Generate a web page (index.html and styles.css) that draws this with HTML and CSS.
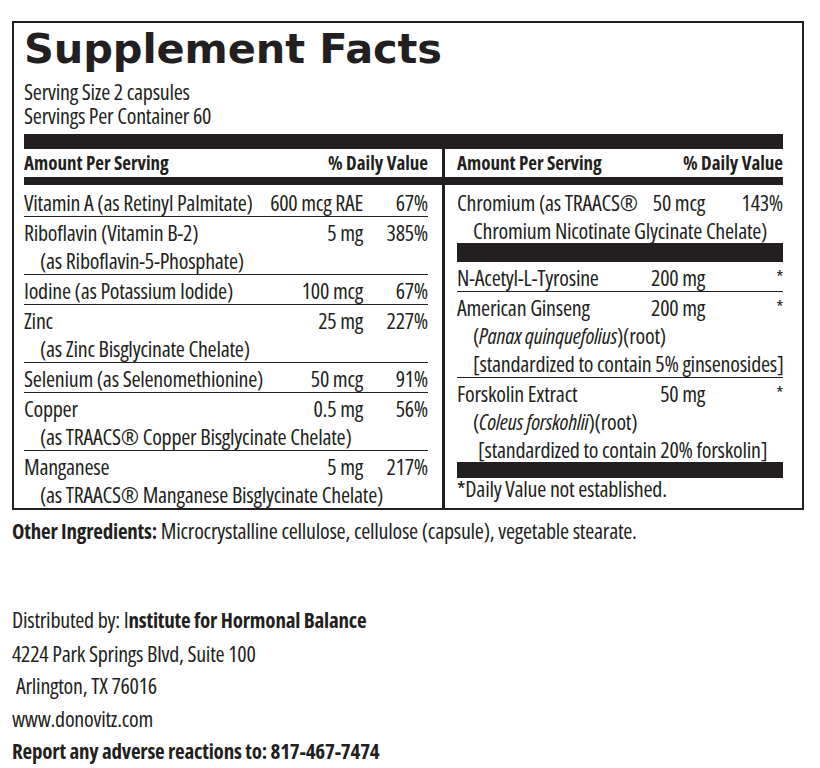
FILE: index.html
```html
<!DOCTYPE html>
<html lang="en">
<head>
<meta charset="utf-8">
<title>Supplement Facts</title>
<link rel="stylesheet" href="styles.css">
</head>
<body>
<div class="label">
  <h1 class="title">Supplement Facts</h1>
  <div class="serving">
    <div>Serving Size 2 capsules</div>
    <div>Servings Per Container 60</div>
  </div>
  <div class="bar bar-top"></div>
  <div class="cols">
    <section class="col col-left">
      <div class="head"><span>Amount Per Serving</span><span>% Daily Value</span></div>
      <div class="bar bar-head"></div>
      <div class="rows">
        <div class="row first">
          <div class="line"><span class="name">Vitamin A (as Retinyl Palmitate)</span><span class="amt">600 mcg RAE</span><span class="pct">67%</span></div>
        </div>
        <div class="row">
          <div class="line"><span class="name">Riboflavin (Vitamin B-2)</span><span class="amt">5 mg</span><span class="pct">385%</span></div>
          <div class="sub">(as Riboflavin-5-Phosphate)</div>
        </div>
        <div class="row">
          <div class="line"><span class="name">Iodine (as Potassium Iodide)</span><span class="amt">100 mcg</span><span class="pct">67%</span></div>
        </div>
        <div class="row">
          <div class="line"><span class="name">Zinc</span><span class="amt">25 mg</span><span class="pct">227%</span></div>
          <div class="sub">(as Zinc Bisglycinate Chelate)</div>
        </div>
        <div class="row">
          <div class="line"><span class="name">Selenium (as Selenomethionine)</span><span class="amt">50 mcg</span><span class="pct">91%</span></div>
        </div>
        <div class="row">
          <div class="line"><span class="name">Copper</span><span class="amt">0.5 mg</span><span class="pct">56%</span></div>
          <div class="sub">(as TRAACS® Copper Bisglycinate Chelate)</div>
        </div>
        <div class="row last">
          <div class="line"><span class="name">Manganese</span><span class="amt">5 mg</span><span class="pct">217%</span></div>
          <div class="sub">(as TRAACS® Manganese Bisglycinate Chelate)</div>
        </div>
      </div>
    </section>
    <section class="col col-right">
      <div class="head"><span>Amount Per Serving</span><span>% Daily Value</span></div>
      <div class="bar bar-head"></div>
      <div class="rows">
        <div class="row first last">
          <div class="line"><span class="name">Chromium (as TRAACS®</span><span class="amt">50 mcg</span><span class="pct">143%</span></div>
          <div class="sub">Chromium Nicotinate Glycinate Chelate)</div>
        </div>
        <div class="bar bar-mid"></div>
        <div class="row">
          <div class="line"><span class="name">N-Acetyl-L-Tyrosine</span><span class="amt">200 mg</span><span class="pct star">*</span></div>
        </div>
        <div class="row">
          <div class="line"><span class="name">American Ginseng</span><span class="amt">200 mg</span><span class="pct star">*</span></div>
          <div class="sub">(<i>Panax quinquefolius</i>)(root)</div>
          <div class="sub">[standardized to contain 5% ginsenosides]</div>
        </div>
        <div class="row last">
          <div class="line"><span class="name">Forskolin Extract</span><span class="amt">50 mg</span><span class="pct star">*</span></div>
          <div class="sub">(<i>Coleus forskohlii</i>)(root)</div>
          <div class="sub sub-wide">[standardized to contain 20% forskolin]</div>
        </div>
        <div class="bar bar-foot"></div>
        <div class="foot">*Daily Value not established.</div>
      </div>
    </section>
  </div>
</div>

<p class="other"><b>Other Ingredients:</b> Microcrystalline cellulose, cellulose (capsule), vegetable stearate.</p>

<div class="dist">
  <p>Distributed by: I<b>nstitute for Hormonal Balance</b></p>
  <p>4224 Park Springs Blvd, Suite 100</p>
  <p class="indent">Arlington, TX 76016</p>
  <p>www.donovitz.com</p>
  <p><b>Report any adverse reactions to: 817-467-7474</b></p>
</div>
</body>
</html>
```
FILE: styles.css
```css
* { box-sizing: border-box; }

body {
  margin: 0;
  background: #ffffff;
  color: #231f20;
  font-family: "Open Sans", "Liberation Sans", sans-serif;
  font-stretch: 75%;
  font-size: 22px;
  line-height: 28px;
  letter-spacing: -0.25px;
}

b {
  font-weight: 700;
  font-size: 21px;
  letter-spacing: -0.2px;
}
i { font-style: italic; }

.label {
  margin: 21px 0 0 12px;
  width: 792px;
  border: 2px solid #231f20;
  padding: 4px 19px 0 10px;
}

.title {
  margin: 0;
  font-family: "DejaVu Sans", "Liberation Sans", sans-serif;
  font-stretch: normal;
  font-weight: 700;
  font-size: 41.5px;
  line-height: 44px;
  letter-spacing: -0.1px;
}

.serving {
  margin-top: 9px;
  line-height: 23.5px;
}

.bar { background: #231f20; }
.bar-top { height: 15px; margin-top: 7px; }
.bar-head { height: 8px; }
.bar-mid { height: 19px; margin-top: -1px; }
.bar-foot { height: 16px; margin-top: -1px; }

.cols {
  display: grid;
  grid-template-columns: 418px minmax(0, 1fr);
}

.col { min-width: 0; }
.col-right { border-left: 3px solid #231f20; }

.head {
  display: flex;
  justify-content: space-between;
  font-weight: 700;
  font-size: 19px;
  line-height: 28px;
  letter-spacing: 0;
}

.col-left .head { padding-right: 14px; }
.col-right .head { padding-left: 12px; }

.col-left .rows { padding-right: 14px; }
.col-right .rows { padding-left: 12px; }

.row {
  padding-top: 1px;
  border-bottom: 1px solid #231f20;
}
.row.first { padding-top: 3px; }
.row.last { border-bottom: 0; }

.line {
  display: grid;
  grid-template-columns: 1fr auto 65px;
  white-space: nowrap;
}
.col-right .line { grid-template-columns: 1fr auto 78px; }

.amt, .pct { text-align: right; }
.star { font-size: 18px; }

.sub { padding-left: 16px; white-space: nowrap; }
.sub-wide { padding-left: 21px; }

.foot { line-height: 21px; }

.other {
  margin: 6px 0 0 12px;
  line-height: 28px;
}

.dist {
  margin: 58px 0 0 12px;
}
.dist p {
  margin: 0;
  line-height: 32.5px;
}
.dist .indent { padding-left: 4px; }
```
